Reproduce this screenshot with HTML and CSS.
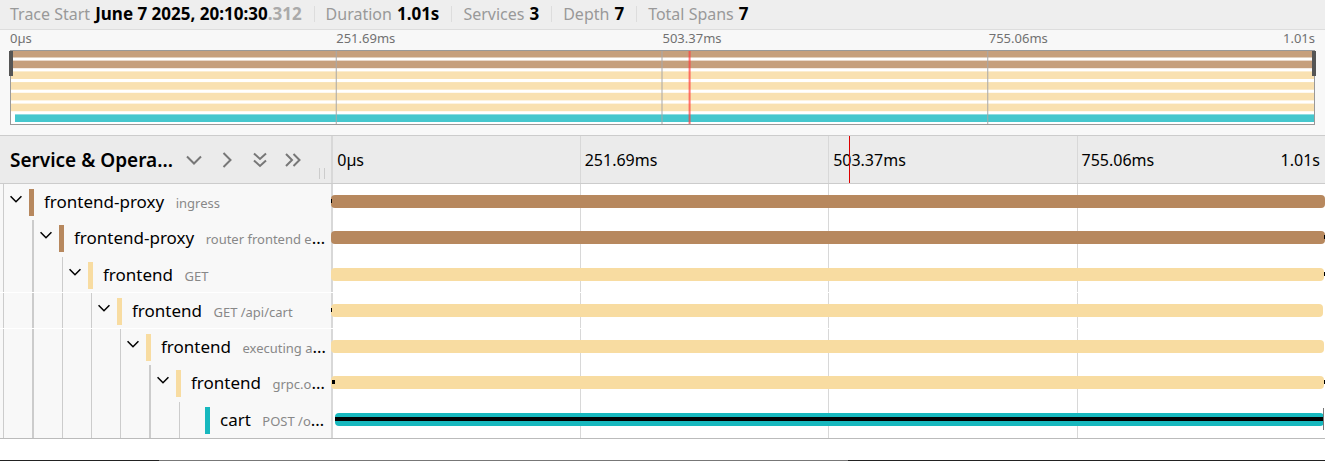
FILE: index.html
```html
<!DOCTYPE html>
<html lang="en">
<head>
<meta charset="utf-8">
<title>Trace timeline</title>
<link rel="stylesheet" href="styles.css">
</head>
<body>
<svg class="defs" aria-hidden="true">
  <symbol id="down" viewBox="0 0 18 18"><path d="M2 5.500l7 7 7-7"/></symbol>
  <symbol id="right" viewBox="0 0 18 18"><path d="M5.500 2l7 7-7 7"/></symbol>
  <symbol id="double-down" viewBox="0 0 18 18"><path d="M3 2.500l6 5.500 6-5.500M3 9.500l6 5.500 6-5.500"/></symbol>
  <symbol id="double-right" viewBox="0 0 18 18"><path d="M2 3l6 6-6 6M9.500 3l6 6-6 6"/></symbol>
</svg>

<header>
  <ul class="overview">
    <li>Trace Start <b>June 7 2025, 20:10:30<span class="millis">.312</span></b></li>
    <li>Duration <b>1.01s</b></li>
    <li>Services <b>3</b></li>
    <li>Depth <b>7</b></li>
    <li>Total Spans <b>7</b></li>
  </ul>
  <section class="minimap" aria-label="Trace overview">
    <div class="minimap-labels"><span>0µs</span><span>251.69ms</span><span>503.37ms</span><span class="minimap-last">755.06ms<span>1.01s</span></span></div>
    <div class="graph">
      <svg class="graph-canvas" aria-hidden="true">
        <g fill="#c69f7c"><rect width="100%" height="6.500"/><rect y="9.600" width="100%" height="7.600"/></g>
        <g fill="#f9e1b1"><rect y="20.400" width="100%" height="7.600"/><rect y="31.100" width="100%" height="7.600"/><rect y="41.800" width="100%" height="7.600"/><rect y="52.600" width="100%" height="7.600"/></g>
        <rect x="4" y="63.400" width="100%" height="7.600" fill="#45c7cd"/>
        <g transform="translate(-1)">
          <g fill="#a8a8a8"><rect x="25%" width="1" height="73"/><rect x="50%" width="1" height="73"/><rect x="75%" width="1" height="73"/></g>
          <rect x="52.080%" width="2" height="73" fill="#ff3c3c" opacity=".7"/>
        </g>
      </svg>
      <i class="handle handle-left"></i><i class="handle handle-right"></i>
    </div>
  </section>
</header>

<main>
  <div class="timeline-head">
    <div class="title-cell">
      <h2>Service &amp; Opera…</h2>
      <button type="button" aria-label="Collapse one level"><svg><use href="#down"/></svg></button>
      <button type="button" aria-label="Expand one level"><svg><use href="#right"/></svg></button>
      <button type="button" aria-label="Collapse all"><svg><use href="#double-down"/></svg></button>
      <button type="button" aria-label="Expand all"><svg><use href="#double-right"/></svg></button>
      <i class="grip"></i>
    </div>
    <div class="track">
      <span class="tick">0µs</span><span class="tick">251.69ms</span><span class="tick">503.37ms</span><span class="tick last">755.06ms<span>1.01s</span></span>
      <i class="cursor"></i>
    </div>
  </div>

  <div class="rows">
    <div class="row brown">
      <div class="name"><i class="guide"></i><button type="button" class="toggle" aria-label="Collapse"><svg><use href="#down"/></svg></button><a href="#s1">frontend-proxy <small>ingress</small></a></div>
      <div class="track"><i class="tick"></i><i class="tick"></i><i class="tick"></i><i class="tick"></i><div class="bar"><i class="mark start"></i></div></div>
    </div>
    <div class="row brown">
      <div class="name"><i class="guide"></i><i class="guide"></i><button type="button" class="toggle" aria-label="Collapse"><svg><use href="#down"/></svg></button><a href="#s2">frontend-proxy <small>router frontend e</small>…</a></div>
      <div class="track"><i class="tick"></i><i class="tick"></i><i class="tick"></i><i class="tick"></i><div class="bar"><i class="mark end"></i></div></div>
    </div>
    <div class="row yellow ruled">
      <div class="name"><i class="guide"></i><i class="guide"></i><i class="guide"></i><button type="button" class="toggle" aria-label="Collapse"><svg><use href="#down"/></svg></button><a href="#s3">frontend <small>GET</small></a></div>
      <div class="track"><i class="tick"></i><i class="tick"></i><i class="tick"></i><i class="tick"></i><div class="bar short"><i class="mark after"></i></div></div>
    </div>
    <div class="row yellow ruled">
      <div class="name"><i class="guide"></i><i class="guide"></i><i class="guide"></i><i class="guide"></i><button type="button" class="toggle" aria-label="Collapse"><svg><use href="#down"/></svg></button><a href="#s4">frontend <small>GET /api/cart</small></a></div>
      <div class="track"><i class="tick"></i><i class="tick"></i><i class="tick"></i><i class="tick"></i><div class="bar shorter"><i class="mark start"></i></div></div>
    </div>
    <div class="row yellow">
      <div class="name"><i class="guide"></i><i class="guide"></i><i class="guide"></i><i class="guide"></i><i class="guide"></i><button type="button" class="toggle" aria-label="Collapse"><svg><use href="#down"/></svg></button><a href="#s5">frontend <small>executing a</small>…</a></div>
      <div class="track"><i class="tick"></i><i class="tick"></i><i class="tick"></i><i class="tick"></i><div class="bar short"></div></div>
    </div>
    <div class="row yellow">
      <div class="name"><i class="guide"></i><i class="guide"></i><i class="guide"></i><i class="guide"></i><i class="guide"></i><i class="guide"></i><button type="button" class="toggle" aria-label="Collapse"><svg><use href="#down"/></svg></button><a href="#s6">frontend <small>grpc.o</small>…</a></div>
      <div class="track"><i class="tick"></i><i class="tick"></i><i class="tick"></i><i class="tick"></i><div class="bar short"><i class="mark inner"></i><i class="mark after"></i></div></div>
    </div>
    <div class="row teal">
      <div class="name"><i class="guide"></i><i class="guide"></i><i class="guide"></i><i class="guide"></i><i class="guide"></i><i class="guide"></i><i class="guide"></i><span class="toggle"></span><a href="#s7">cart <small>POST /o</small>…</a></div>
      <div class="track"><i class="tick"></i><i class="tick"></i><i class="tick"></i><i class="tick"></i><div class="bar inset"><i class="mark full"></i><i class="log"></i></div></div>
    </div>
  </div>
</main>
<footer></footer>
</body>
</html>
```
FILE: styles.css
```css
* { box-sizing: border-box; }
body {
  margin: 0;
  min-height: 100vh;
  display: flex;
  flex-direction: column;
  background: #fff;
  color: #000;
  font: 16px/24px "Noto Sans", "Open Sans", sans-serif;
  white-space: nowrap;
}
button { padding: 0; border: 0; background: none; display: flex; cursor: pointer; }
a { color: inherit; text-decoration: none; }
svg { display: block; }
symbol path { fill: none; stroke: currentColor; stroke-width: 2; }
.defs { position: absolute; width: 0; height: 0; }

/* Trace summary */
.overview {
  display: flex;
  align-items: center;
  margin: 0;
  padding: 2px 10px 3px;
  list-style: none;
  background: #eee;
  border-bottom: 1px solid #ddd;
  color: #999;
}
.overview li { display: flex; align-items: center; gap: 5px; }
.overview li + li::before { content: ""; height: 16px; margin: 0 6px 0 12px; border-left: 1px solid #ddd; }
.overview b { color: #000; font-size: 17px; }
.overview .millis { color: #aaa; }

/* Overview graph */
.minimap { padding: 0 10px 10px; background: #f8f8f8; }
.minimap-labels {
  display: grid;
  grid-template-columns: repeat(4, 1fr);
  padding-bottom: 4px;
  font-size: 13px;
  line-height: 16px;
  color: #717171;
}
.minimap-last { display: flex; justify-content: space-between; }
.graph { position: relative; border: 1px solid #999; background: #fff; }
.graph-canvas { width: 100%; height: 73px; }
.handle { position: absolute; top: 0; width: 4px; height: 25px; background: #555; }
.handle-left { left: -2px; }
.handle-right { right: -2px; }

/* Timeline */
.timeline-head, .row { display: grid; grid-template-columns: minmax(0, 1fr) minmax(0, 3fr); }
.timeline-head { height: 49px; background: #ebebeb; border: solid #ccc; border-width: 1px 0; }
.title-cell { position: relative; display: flex; align-items: center; padding: 0 10px; }
.title-cell h2 { margin: 0 12px 0 0; flex: none; font-size: 19px; font-weight: 600; line-height: 24px; }
.title-cell button { margin-right: 15px; color: #777; }
.title-cell button svg { width: 18px; height: 18px; }
.grip { position: absolute; right: 6px; bottom: 4px; width: 6px; height: 11px; border: solid #ccc; border-width: 0 1px; }
.track {
  position: relative;
  display: grid;
  grid-template-columns: repeat(4, minmax(0, 1fr));
}
.tick { grid-row: 1; border-left: 1px solid #d8d8d8; }
.tick:nth-child(1) { grid-column: 1; border-left-width: 2px; }
.tick:nth-child(2) { grid-column: 2; }
.tick:nth-child(3) { grid-column: 3; }
.tick:nth-child(4) { grid-column: 4; }
.timeline-head .tick { display: flex; align-items: center; padding: 0 5px 0 4px; }
.timeline-head .last { justify-content: space-between; }
.cursor { position: absolute; left: 52.1%; top: 0; bottom: 0; width: 1px; background: #d00; }

.rows { display: grid; grid-template-rows: 36px 37px 36px 36px 36px 37px 36px; border-bottom: 1px solid #bbb; }
.brown { --color: #b7885e; }
.yellow { --color: #f8dca1; }
.teal { --color: #17b8be; }
.ruled { border-bottom: 1px solid #fff; }
.name { display: flex; align-items: flex-start; background: #f8f8f8; overflow: hidden; }
.guide { flex: none; align-self: stretch; width: 29px; border-right: 1px solid #ccc; }
.guide:nth-of-type(1) { width: 4px; }
.guide:nth-of-type(2), .guide:nth-of-type(6) { width: 30px; border-right-width: 2px; }
.toggle { flex: none; width: 25px; padding: 8px 0 0 5px; }
.toggle svg { width: 14px; height: 14px; }
.name a { margin-top: 5px; padding-left: 10px; border-left: 5px solid var(--color); font-size: 17px; line-height: 26px; }
.name small { margin-left: 7px; font-size: 13px; color: #888; }
.bar { position: relative; grid-row: 1; grid-column: 1 / -1; height: 13px; margin-top: 11px; border-radius: 4px; background: var(--color); }
.short { margin-right: 1px; }
.shorter { margin-right: 2px; }
.inset { margin-right: 1px; margin-left: 4px; }
.mark { position: absolute; top: 4px; width: 2px; height: 4px; background: #000; }
.start { left: 0; width: 1px; }
.end { right: 0; width: 1px; }
.after { right: -1px; width: 1px; }
.inner { left: 1px; width: 3px; }
.full { left: 0; width: 100%; }
.log { position: absolute; right: 0; top: -5px; bottom: -4px; width: 1px; background: #777; }

footer { margin-top: auto; height: 1px; background: linear-gradient(90deg, #222 12%, #777 12% 64%, #222 64%); }
```
